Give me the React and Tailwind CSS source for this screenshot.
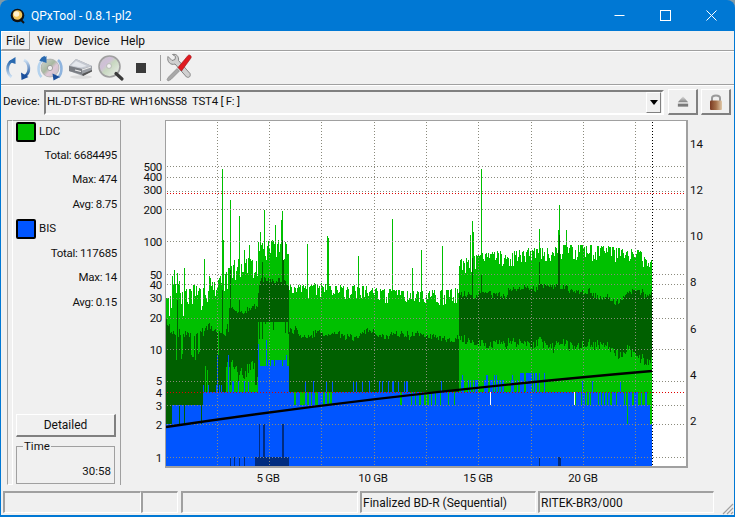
import React from "react";

function rng(seed) {
  let a = seed >>> 0;
  return () => {
    a = (a + 0x6d2b79f5) >>> 0;
    let t = a;
    t = Math.imul(t ^ (t >>> 15), t | 1);
    t ^= t + Math.imul(t ^ (t >>> 7), t | 61);
    return ((t ^ (t >>> 14)) >>> 0) / 4294967296;
  };
}
const interp = (pts, x) => {
  for (let i = 1; i < pts.length; i++) {
    if (x <= pts[i][0]) {
      const [x0, y0] = pts[i - 1];
      const [x1, y1] = pts[i];
      return y0 + ((y1 - y0) * (x - x0)) / (x1 - x0 || 1);
    }
  }
  return pts[pts.length - 1][1];
};

const lightPts = [[166,307],[170,305],[172,285],[175,275],[178,285],[182,300],[190,296],[195,292],[200,296],[208,284],[216,292],[219,286],[224,282],[233,268],[245,266],[257,266],[258,250],[275,247],[288,250],[289,288],[300,290],[320,288],[340,291],[360,291],[380,293],[400,296],[430,296],[458,293],[459,265],[470,263],[480,259],[500,256],[520,256],[559,250],[600,251],[640,256],[652,261]];
const darkTopPts = [[166,322],[200,326],[217,326],[228,322],[229,304],[257,300],[259,276],[288,281],[289,326],[330,330],[370,335],[458,340],[459,298],[490,296],[560,289],[600,293],[652,297]];
const lightSpikes = { 222:169,223:240,204:259,184:268,230:200,239:216,244:250,249:245,264:210,282:211,281:220,307:244,327:236,328:238,358:256,392:219,442:246,472:221,473:232,481:169,539:229,559:205,558:230,260:232,275:225,528:248,566:230,470:235,412:268,421:250 };
const darkSpikes = { 177:300,222:290,230:270,239:300,262:262,282:240,283:260,472:258,481:275,539:262,559:235,558:250 };

const R = rng(7);
let light = "", dark = "", blue = "", white = "";
let walk = 0, walk2 = 0;
for (let x = 166; x < 652; x += 1) {
  const n1 = R(), n2 = R(), n3 = R(), n4 = R(), n5 = R();
  walk = Math.max(-6, Math.min(8, walk + (R() - 0.5) * 4));
  walk2 = Math.max(-8, Math.min(8, walk2 + (R() - 0.5) * 5));
  let lt = interp(lightPts, x) + (n1 * n1 - 0.35) * (x < 224 ? 26 : x < 289 ? 22 : 16);
  if (lightSpikes[x]) lt = lightSpikes[x];
  let dt = interp(darkTopPts, x) + walk + (n2 - 0.3) * (x < 229 ? 10 : 6);
  if (x < 229 && n5 > 0.85) dt += n5 * 24;
  if (darkSpikes[x]) dt = darkSpikes[x];
  let bt, db;
  if (x < 172) bt = 424;
  else if (x < 203) bt = 405;
  else if (x < 258) bt = 392;
  else if (x < 289) bt = 366;
  else bt = 392;

  if (x < 203) {
    if (x >= 172 && n3 < 0.2) bt = 424;
    db = bt;
  } else if (x < 226) {
    db = n5 < 0.12 ? 362 + n2 * 12 : 392;
  } else if (x < 258) {
    db = n5 < 0.3 ? 385 : 360 + n2 * 20;
  } else if (x < 289) {
    db = 322 + (n5 > 0.85 ? n2 * 18 : 0);
  } else if (x < 459) {
    db = 392;
  } else {
    db = interp([[459,346],[520,348],[600,352],[652,360]], x) + walk2 + (n2 - 0.5) * 9;
  }

  if (x >= 203 && x < 258 && n4 < 0.22) bt = x > 225 ? 381 : 385;
  if (x >= 203 && x < 258 && n4 > 0.97) bt = 355;
  if (x >= 258 && x < 289 && n4 < 0.2) bt = 340 + n3 * 20;
  if (x >= 268 && x < 286 && n4 < 0.7) bt = 360;
  if (x >= 289 && x < 459 && n4 < 0.12) bt = 381;
  if (x >= 289 && x < 332 && n3 < 0.3) bt = 405;
  if (x >= 400 && x < 459 && n3 < 0.2) bt = 405;
  if (x >= 459 && x < 545) {
    if (n4 < 0.28) bt = 380;
    else if (n4 < 0.4) bt = 375;
  }
  if (x >= 520 && x < 545 && n4 < 0.6) bt = 373;
  if (x >= 575 && n3 < 0.32) bt = 405;
  if (x >= 575 && n4 < 0.1) bt = 381;
  if (x === 627 || x === 650 || x === 651) bt = 424;
  light += `M${x} ${Math.round(lt)}h1V467h-1z`;
  if (db > dt) dark += `M${x} ${Math.round(dt)}h1V${Math.round(db)}h-1z`;
  blue += `M${x} ${Math.round(bt)}h1V467h-1z`;
  if (x === 574 || x === 490) white += `M${x} 392h1V405h-1z`;
}

const hGrid = [166, 177, 191, 209, 241, 274, 284, 298, 318, 349, 381, 405, 424, 457];
const vGrid = [217, 269, 321, 374, 426, 478, 531, 583, 635];
const leftLabels = [["500",167],["400",177],["300",190],["200",210],["100",242],["50",275],["40",285],["30",298],["20",318],["10",350],["5",381],["4",393],["3",406],["2",425],["1",458]];
const rightLabels = [["14",144],["12",190],["10",236],["8",282],["6",329],["4",375],["2",421]];
const xLabels = [["5 GB",268],["10 GB",373],["15 GB",478],["20 GB",583]];

function Chart() {
  return (
    <svg width="523" height="348" viewBox="165 120 523 348" className="block shrink-0">
      <rect x="165" y="120" width="523" height="348" fill="#ffffff" />
      <g shapeRendering="crispEdges">
        <path d={light} fill="#00c000" />
        <path d={dark} fill="#006000" />
        <path d={blue} fill="#0055ff" />
        <path d={white} fill="#ffffff" />
        <path d="M255 457h34v10h-34zM230 457h1v10h-1zM234 457h1v10h-1zM239 457h1v10h-1zM244 457h1v10h-1zM259 424h1v33h-1zM263 424h2v33h-2zM282 424h2v33h-2zM539 457h1v10h-1zM558 457h3v10h-3z" fill="#002c80" />
        <g strokeWidth="1" strokeDasharray="1 2" fill="none">
          {hGrid.map((y) => (
            <path key={y} d={`M167 ${y + 0.5}H687`} stroke="#8a8a7c" />
          ))}
          {vGrid.map((x) => (
            <path key={x} d={`M${x + 0.5} 122V467`} stroke="#8a8a7c" />
          ))}
          <path d="M167 193.5H687M167 392.5H687" stroke="#e00000" />
          <path d="M652.5 122V467" stroke="#000000" />
        </g>
      </g>
      <path d="M166 427C300 407 480 386 652 371" stroke="#000000" strokeWidth="2.4" fill="none" />
      <rect x="165" y="120" width="522" height="347" fill="none" stroke="#a0a0a0" strokeWidth="2" shapeRendering="crispEdges" />
    </svg>
  );
}

const QIcon = () => (
  <svg width="16" height="16" viewBox="0 0 16 16">
    <circle cx="7.5" cy="7.5" r="6.8" fill="#111" />
    <circle cx="7.5" cy="7" r="4.8" fill="#f2c75c" />
    <circle cx="6.5" cy="6" r="2.8" fill="#fff2cf" />
    <path d="M10 11l4 4" stroke="#111" strokeWidth="2" />
  </svg>
);

const Refresh = () => (
  <svg width="28" height="30" viewBox="0 0 28 30">
    <defs>
      <linearGradient id="rfa" x1="0" y1="0" x2="0" y2="1">
        <stop offset="0" stopColor="#2a6ab0" />
        <stop offset="1" stopColor="#cfe2f4" />
      </linearGradient>
      <linearGradient id="rfb" x1="0" y1="0" x2="0" y2="1">
        <stop offset="0" stopColor="#cfe2f4" />
        <stop offset="1" stopColor="#1a4f9c" />
      </linearGradient>
    </defs>
    <path d="M8 8C2.5 11 2 20 7.5 24" stroke="url(#rfa)" strokeWidth="2.8" fill="none" />
    <path d="M11.5 4L11.5 11L4.5 8.5z" fill="#2a6ab0" />
    <path d="M20 7C26 10 26.5 19.5 21 23" stroke="url(#rfb)" strokeWidth="2.8" fill="none" />
    <path d="M17 19.5L17.5 27L24.5 24z" fill="#1a4f9c" />
  </svg>
);

const CdRefresh = () => (
  <svg width="28" height="30" viewBox="0 0 28 30">
    <defs>
      <linearGradient id="cd1" x1="0" y1="0" x2="1" y2="1">
        <stop offset="0" stopColor="#d8d8d8" />
        <stop offset="0.45" stopColor="#a8b8a0" />
        <stop offset="0.6" stopColor="#e0c8d8" />
        <stop offset="1" stopColor="#c0c0c0" />
      </linearGradient>
    </defs>
    <circle cx="14" cy="15" r="9" fill="url(#cd1)" stroke="#a0a0a0" strokeWidth="0.6" />
    <circle cx="14" cy="15" r="2.6" fill="#f0f0f0" stroke="#909090" strokeWidth="0.8" />
    <path d="M6 8C1.5 11 1.5 20 5.5 24" stroke="#b5d3ee" strokeWidth="2.6" fill="none" />
    <path d="M9 4C6 5 5.5 6 4.5 8" stroke="#2a6ab0" strokeWidth="2.4" fill="none" />
    <path d="M10.5 3L10.5 10L3.5 7.5z" fill="#2a6ab0" />
    <path d="M22 7C26.5 11 26.5 20 22.5 24" stroke="#8fb4de" strokeWidth="2.6" fill="none" />
    <path d="M16.5 20.5L17.5 27.5L24 24z" fill="#1a4f9c" />
  </svg>
);

const Drive = () => (
  <svg width="26" height="24" viewBox="0 0 26 24">
    <ellipse cx="14" cy="21" rx="11" ry="1.8" fill="#dcdcdc" />
    <path d="M2 10L9 3L25 10L25 15L16 20L2 15z" fill="#9a9ea4" />
    <path d="M2 10L9 3L25 10L15 13z" fill="#c4c8d0" />
    <path d="M4 9.5L9 5L20 10L14 11.5z" fill="#e4e7ec" />
    <path d="M2 10L15 13L15 18.5L2 15z" fill="#7a7d83" />
    <path d="M8 14L14 15.5M15 14L24 11" stroke="#ececec" strokeWidth="1.2" />
    <path d="M15 18L25 14V15.5L16 20z" fill="#555" />
  </svg>
);

const Magnifier = () => (
  <svg width="28" height="30" viewBox="0 0 28 30">
    <defs>
      <linearGradient id="mg" x1="0" y1="0" x2="1" y2="1">
        <stop offset="0" stopColor="#c8c8c8" />
        <stop offset="0.35" stopColor="#d0c0d8" />
        <stop offset="0.5" stopColor="#c8d8c0" />
        <stop offset="1" stopColor="#f0f0f0" />
      </linearGradient>
    </defs>
    <circle cx="12.5" cy="13.5" r="10.5" fill="url(#mg)" stroke="#a0a0a0" strokeWidth="1.6" />
    <circle cx="12" cy="13" r="2.4" fill="#f4f4f4" stroke="#aaaaaa" strokeWidth="0.7" />
    <path d="M19 20.5L25 26" stroke="#3a3a3a" strokeWidth="3.2" strokeLinecap="round" />
  </svg>
);

const Tools = () => (
  <svg width="28" height="30" viewBox="0 0 28 30">
    <path d="M3 3.5L7 7.5L10 6.5L10.5 3.5L7.5 1.5C11.5 0.5 14 3.5 13.5 7.5L25 20.5C26 23.5 24 25 21.5 24L10 11C6 12.5 1.5 9 3 3.5z" fill="#d0d0d0" stroke="#7c7c7c" strokeWidth="0.9" />
    <path d="M2 26.5L3.5 24L12 15.5L14.5 18L6 26.5L3 28z" fill="#a8a8a8" stroke="#777" strokeWidth="0.5" />
    <path d="M13 14.5L23 2.5C24.5 1 27 3 26 5L16.5 18z" fill="#e01a20" stroke="#9c1015" strokeWidth="0.6" />
  </svg>
);

const Eject = () => (
  <svg width="12" height="13" viewBox="0 0 14 14">
    <defs>
      <linearGradient id="ej" x1="0" y1="0" x2="0" y2="1">
        <stop offset="0" stopColor="#e0e0e0" />
        <stop offset="1" stopColor="#808080" />
      </linearGradient>
    </defs>
    <path d="M7 1L13 8H1z" fill="url(#ej)" />
    <rect x="1" y="9.5" width="12" height="3.5" fill="#7a7a7a" />
  </svg>
);

const Lock = () => (
  <svg width="14" height="18" viewBox="0 0 14 18">
    <defs>
      <linearGradient id="lk" x1="0" y1="0" x2="1" y2="0">
        <stop offset="0" stopColor="#7a3a22" />
        <stop offset="0.5" stopColor="#a4704a" />
        <stop offset="1" stopColor="#e0c8a8" />
      </linearGradient>
    </defs>
    <path d="M3 8V5C3 1.5 11 1.5 11 5V8" fill="none" stroke="#9a9a9a" strokeWidth="2" />
    <rect x="1" y="7.5" width="12" height="9.5" rx="1" fill="url(#lk)" />
  </svg>
);

const Stat = ({ label, value }) => (
  <div className="h-[24.5px] flex items-center justify-end pr-[3px] whitespace-pre tracking-[-0.3px]">
    {label}: {value}
  </div>
);

const Legend = ({ color, name, className }) => (
  <div className={`flex items-center gap-[3px] ${className}`}>
    <div className={`w-[20px] h-[20px] rounded-[2px] border-2 border-black ${color}`} />
    <span>{name}</span>
  </div>
);

const StatusCell = ({ className }) => (
  <div className={`h-[22px] border-t-2 border-l-2 border-t-[#a0a0a0] border-l-[#a0a0a0] border-r border-b border-r-white border-b-white flex items-center pl-[2px] ${className}`} />
);

export default function App() {
  return (
    <div className="w-[735px] h-[517px] bg-[#7f9aa8] overflow-hidden font-['Roboto',sans-serif] text-[11.5px] text-[#111111]">
      <div className="w-full h-full rounded-t-[8px] bg-[#0078d4] flex flex-col px-px pb-[2px]">
        <div className="h-[31px] shrink-0 flex items-center text-white relative">
          <div className="pl-[9px] pr-[5px] flex items-center"><QIcon /></div>
          <span className="text-[12px]">QPxTool - 0.8.1-pl2</span>
          <div className="ml-auto flex items-center h-full">
            <div className="w-[46px] flex justify-center">
              <svg width="11" height="11" viewBox="0 0 11 11"><path d="M0.5 5.5H10.5" stroke="#fff" /></svg>
            </div>
            <div className="w-[46px] flex justify-center">
              <svg width="11" height="11" viewBox="0 0 11 11"><rect x="0.5" y="0.5" width="10" height="10" fill="none" stroke="#fff" /></svg>
            </div>
            <div className="w-[46px] flex justify-center">
              <svg width="11" height="11" viewBox="0 0 11 11"><path d="M0.5 0.5L10.5 10.5M10.5 0.5L0.5 10.5" stroke="#fff" /></svg>
            </div>
          </div>
        </div>

        <div className="flex-1 min-h-0 bg-[#f0f0f0] flex flex-col">
          <div className="h-[19px] shrink-0 flex items-center text-[12px]">
            <div className="h-[19px] w-[29px] flex items-center justify-center border-t border-l border-white border-r border-b border-r-[#a0a0a0] border-b-[#a0a0a0]">File</div>
            <span className="ml-[7px]">View</span>
            <span className="ml-[11px]">Device</span>
            <span className="ml-[11px]">Help</span>
          </div>
          <div className="h-[35px] shrink-0 border-t border-t-[#a0a0a0] border-b border-b-[#a0a0a0] shadow-[inset_0_1px_0_#ffffff] flex items-center pl-[3px] pr-1">
            <div className="w-[28px] flex justify-center"><Refresh /></div>
            <div className="w-[32px] ml-[2px] flex justify-center"><CdRefresh /></div>
            <div className="w-[28px] flex justify-center"><Drive /></div>
            <div className="w-[33px] flex justify-center"><Magnifier /></div>
            <div className="w-[28px] flex justify-center"><div className="w-[10px] h-[10px] bg-[#3a3a3a]" /></div>
            <div className="w-px h-[26px] bg-[#a0a0a0] ml-[5px]" />
            <div className="ml-[4px]"><Tools /></div>
          </div>

          <div className="h-[33px] shrink-0 flex items-center border-t border-t-white">
            <span className="pl-[2px] w-[43px] shrink-0">Device:</span>
            <div className="w-[620px] h-[25px] shrink-0 border-t-2 border-l-2 border-t-[#808080] border-l-[#808080] border-r-2 border-b-2 border-r-white border-b-white flex items-center pl-px relative">
              <span className="whitespace-pre tracking-[-0.27px]">HL-DT-ST BD-RE  WH16NS58  TST4 [ F: ]</span>
              <div className="ml-auto w-[15px] h-[21px] mr-[1px] bg-[#f0f0f0] border-t border-l border-white border-r border-b border-r-[#808080] border-b-[#808080] flex items-center justify-center">
                <svg width="8" height="5" viewBox="0 0 8 5"><path d="M0 0H8L4 5z" fill="#000" /></svg>
              </div>
            </div>
            <div className="w-[30px] h-[26px] ml-[4px] border-t border-l border-white border-r-2 border-b-2 border-r-[#808080] border-b-[#808080] flex items-center justify-center"><Eject /></div>
            <div className="w-[30px] h-[26px] ml-[3px] border-t border-l border-white border-r-2 border-b-2 border-r-[#808080] border-b-[#808080] flex items-center justify-center"><Lock /></div>
          </div>

          <div className="flex-1 min-h-0 flex">
            <div className="w-[6px] h-[365px] mt-[2px] ml-[6px] shrink-0 border border-[#a0a0a0] border-r-white border-b-white" />
            <div className="w-[108px] h-[365px] mt-[2px] shrink-0 border-r border-r-[#a0a0a0] border-t border-t-[#a0a0a0] flex flex-col pl-[3px]">
              <Legend color="bg-[#00c000]" name="LDC" className="h-[22px]" />
              <Stat label="Total" value="6684495" />
              <Stat label="Max" value="474" />
              <Stat label="Avg" value="8.75" />
              <Legend color="bg-[#0055ff]" name="BIS" className="h-[24.5px]" />
              <Stat label="Total" value="117685" />
              <Stat label="Max" value="14" />
              <Stat label="Avg" value="0.15" />
              <div className="flex-1" />
              <div className="w-[100px] h-[23px] shrink-0 border-t border-l border-white border-r-2 border-b-2 border-r-[#808080] border-b-[#808080] flex items-center justify-center text-[12px]">Detailed</div>
              <div className="w-[99px] h-[38px] mt-[9px] mb-px shrink-0 border border-[#a0a0a0] relative flex items-end justify-end pr-[3px] pb-[3px]">
                <span className="absolute -top-[9px] left-[6px] px-px bg-[#f0f0f0]">Time</span>
                <span>30:58</span>
              </div>
            </div>

            <div className="flex-1 min-w-0 flex flex-col">
              <div className="flex mt-[2px]">
                <div className="w-[44px] h-[348px] shrink-0 relative tracking-[-0.3px]">
                  {leftLabels.map(([t, y]) => (
                    <span key={t} className="absolute right-[3px] -translate-y-1/2 leading-[9px]" style={{ top: y - 120 }}>{t}</span>
                  ))}
                </div>
                <Chart />
                <div className="flex-1 h-[348px] relative">
                  {rightLabels.map(([t, y]) => (
                    <span key={t} className="absolute left-[2px] -translate-y-1/2 leading-[9px]" style={{ top: y - 120 }}>{t}</span>
                  ))}
                </div>
              </div>
              <div className="h-[22px] relative tracking-[-0.3px]">
                {xLabels.map(([t, x]) => (
                  <span key={t} className="absolute top-[5px] -translate-x-1/2 leading-none whitespace-nowrap" style={{ left: x - 121 }}>{t}</span>
                ))}
              </div>
            </div>
          </div>

          <div className="h-[24px] shrink-0 flex items-start pl-[2px] relative text-[12px]">
            <StatusCell className="w-[138px]" />
            <StatusCell className="w-[37px]" />
            <div className="w-[3px]" />
            <StatusCell className="w-[177px]" />
            <div className="w-[2px]" />
            <div className="h-[22px] w-[176px] border-t-2 border-l-2 border-t-[#a0a0a0] border-l-[#a0a0a0] border-r border-b border-r-white border-b-white flex items-center pl-[1px] whitespace-nowrap">Finalized BD-R (Sequential)</div>
            <div className="w-[2px]" />
            <div className="h-[22px] w-[176px] border-t-2 border-l-2 border-t-[#a0a0a0] border-l-[#a0a0a0] border-r border-b border-r-white border-b-white flex items-center pl-[1px] whitespace-nowrap">RITEK-BR3/000</div>
            <svg width="14" height="14" viewBox="0 0 14 14" className="absolute right-0 bottom-0">
              <path d="M13 3L3 13M13 7L7 13M13 11L11 13" stroke="#a0a0a0" strokeWidth="1.2" />
            </svg>
          </div>
        </div>
      </div>
    </div>
  );
}
